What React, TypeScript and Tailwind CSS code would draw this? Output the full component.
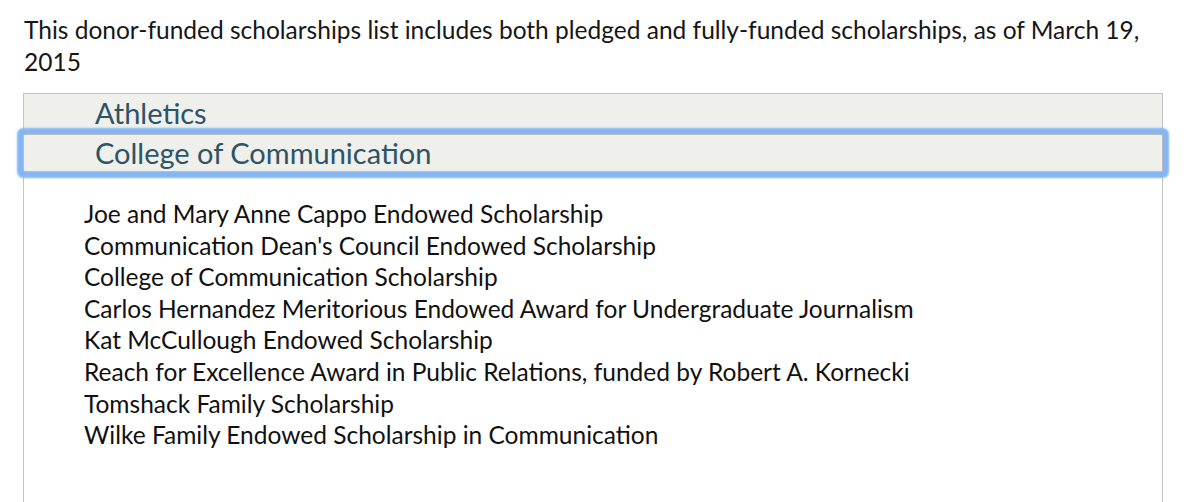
import React from "react";

const items = [
  "Joe and Mary Anne Cappo Endowed Scholarship",
  "Communication Dean's Council Endowed Scholarship",
  "College of Communication Scholarship",
  "Carlos Hernandez Meritorious Endowed Award for Undergraduate Journalism",
  "Kat McCullough Endowed Scholarship",
  "Reach for Excellence Award in Public Relations, funded by Robert A. Kornecki",
  "Tomshack Family Scholarship",
  "Wilke Family Endowed Scholarship in Communication",
];

export default function App() {
  return (
    <div
      className="w-[1200px] h-[502px] overflow-hidden bg-white"
      style={{ fontFamily: "Lato, 'Open Sans', sans-serif" }}
    >
      <p className="pl-[24px] pr-[40px] pt-[14px] text-[24.5px] leading-[32px] text-[#161616]">
        This donor-funded scholarships list includes both pledged and fully-funded scholarships, as of March 19, 2015
      </p>
      <div className="ml-[23px] mt-[15px] w-[1140px] h-[420px] border border-[#c4c4c4] border-b-0">
        <div className="h-[38px] bg-[#efefeb] pl-[71px] flex items-center text-[29px] text-[#2d5466]">
          Athletics
        </div>
        <div className="relative -mx-px mt-[2px] h-[38px] bg-[#efefeb] border border-[#bdbdbd] rounded-[2px] shadow-[0_0_2px_6px_#85b6f3] pl-[71px] flex items-center text-[29px] text-[#2d5466]">
          College of Communication
        </div>
        <ul className="pl-[60px] pt-[26px] text-[24.5px] leading-[31.6px] text-[#111]">
          {items.map((t) => (
            <li key={t}>{t}</li>
          ))}
        </ul>
      </div>
    </div>
  );
}
